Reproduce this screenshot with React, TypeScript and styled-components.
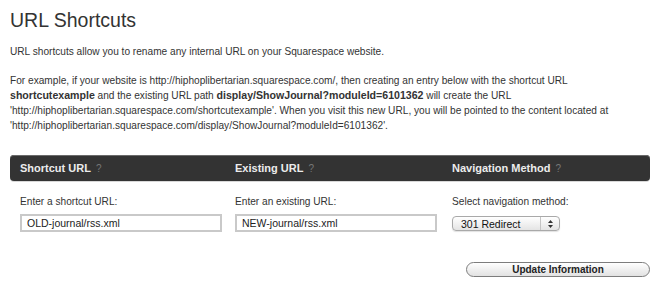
import React from "react";
import styled, { createGlobalStyle } from "styled-components";

const Global = createGlobalStyle`
  html, body { margin: 0; padding: 0; background: #ffffff; }
  body { font-family: "Liberation Sans", Arial, sans-serif; color: #333; }
`;

const Page = styled.div`
  width: 640px;
  padding: 0 10px;
`;

const Title = styled.h1`
  margin: 8px 0 0;
  font-family: "Liberation Sans", Arial, sans-serif;
  font-weight: normal;
  font-size: 19.5px;
  line-height: 24px;
  color: #333;
`;

const Para = styled.p<{ $top: number }>`
  margin: ${(p) => p.$top}px 0 0;
  font-family: "Liberation Sans", Arial, sans-serif;
  font-size: 10.15px;
  line-height: 15px;
  color: #333;
  white-space: nowrap;
  b { font-weight: bold; font-size: 10.6px; }
`;

const Table = styled.div`
  margin-top: 22px;
`;

const HeaderBar = styled.div`
  display: grid;
  grid-template-columns: 215px 217px 1fr;
  height: 26px;
  align-items: center;
  padding: 0 10px;
  background: #333;
  border-radius: 4px;
  box-shadow: inset 0 1px 0 #6a6a6a, 0 1px 0 #d8d8d8;
`;

const HeadCell = styled.div`
  font-family: "Liberation Sans", Arial, sans-serif;
  font-weight: bold;
  font-size: 11px;
  color: #ececec;
`;

const Help = styled.span`
  margin-left: 5px;
  font-size: 10px;
  font-weight: normal;
  color: #777;
`;

const BodyRow = styled.div`
  display: grid;
  grid-template-columns: 215px 217px 1fr;
  padding: 13px 10px 0;
  align-items: start;
`;

const Field = styled.div`
  display: flex;
  flex-direction: column;
  gap: 5px;
`;

const Label = styled.label`
  font-family: "Liberation Sans", Arial, sans-serif;
  font-size: 10.15px;
  line-height: 15px;
  color: #333;
`;

const TextInput = styled.input`
  box-sizing: border-box;
  width: 202px;
  height: 18px;
  margin: 0;
  padding: 0 5px;
  border: 2px solid #c9c9c9;
  background: #fff;
  font-family: "Liberation Sans", Arial, sans-serif;
  font-size: 10.5px;
  color: #222;
  outline: none;
`;

const SelectBox = styled.div`
  box-sizing: border-box;
  display: flex;
  align-items: center;
  width: 108px;
  height: 15px;
  margin-top: 2px;
  border: 1px solid #a9a9a9;
  border-radius: 4px;
  background: linear-gradient(#ffffff, #e4e4e4);
  box-shadow: 0 1px 1px rgba(0, 0, 0, 0.12);
`;

const SelectText = styled.span`
  flex: 1;
  padding-left: 8px;
  font-family: "Liberation Sans", Arial, sans-serif;
  font-size: 10.5px;
  color: #111;
`;

const Arrows = styled.span`
  display: flex;
  align-items: center;
  justify-content: center;
  width: 18px;
  height: 100%;
  border-left: 1px solid #c4c4c4;
`;

const Footer = styled.div`
  display: flex;
  justify-content: flex-end;
  margin-top: 30px;
`;

const Button = styled.button`
  box-sizing: border-box;
  width: 184px;
  height: 15px;
  margin: 0;
  padding: 0;
  border: 1px solid #7d7d7d;
  border-radius: 8px;
  background: linear-gradient(#ffffff, #f0f0f0 50%, #e2e2e2);
  font-family: "Liberation Sans", Arial, sans-serif;
  font-weight: bold;
  font-size: 10px;
  line-height: 13px;
  color: #222;
`;

export default function App() {
  return (
    <>
      <Global />
      <Page>
        <Title>URL Shortcuts</Title>
        <Para $top={12}>URL shortcuts allow you to rename any internal URL on your Squarespace website.</Para>
        <Para $top={14}>
          For example, if your website is http://hiphoplibertarian.squarespace.com/, then creating an entry below with the shortcut URL
          <br />
          <b>shortcutexample</b> and the existing URL path <b>display/ShowJournal?moduleId=6101362</b> will create the URL
          <br />
          'http://hiphoplibertarian.squarespace.com/shortcutexample'. When you visit this new URL, you will be pointed to the content located at
          <br />
          'http://hiphoplibertarian.squarespace.com/display/ShowJournal?moduleId=6101362'.
        </Para>
        <Table>
          <HeaderBar>
            <HeadCell>
              Shortcut URL<Help>?</Help>
            </HeadCell>
            <HeadCell>
              Existing URL<Help>?</Help>
            </HeadCell>
            <HeadCell>
              Navigation Method<Help>?</Help>
            </HeadCell>
          </HeaderBar>
          <BodyRow>
            <Field>
              <Label>Enter a shortcut URL:</Label>
              <TextInput defaultValue="OLD-journal/rss.xml" />
            </Field>
            <Field>
              <Label>Enter an existing URL:</Label>
              <TextInput defaultValue="NEW-journal/rss.xml" />
            </Field>
            <Field>
              <Label>Select navigation method:</Label>
              <SelectBox>
                <SelectText>301 Redirect</SelectText>
                <Arrows>
                  <svg width="5" height="8" viewBox="0 0 5 8">
                    <path d="M2.5 0 L5 3 L0 3 Z" fill="#333" />
                    <path d="M2.5 8 L5 5 L0 5 Z" fill="#333" />
                  </svg>
                </Arrows>
              </SelectBox>
            </Field>
          </BodyRow>
          <Footer>
            <Button>Update Information</Button>
          </Footer>
        </Table>
      </Page>
    </>
  );
}
